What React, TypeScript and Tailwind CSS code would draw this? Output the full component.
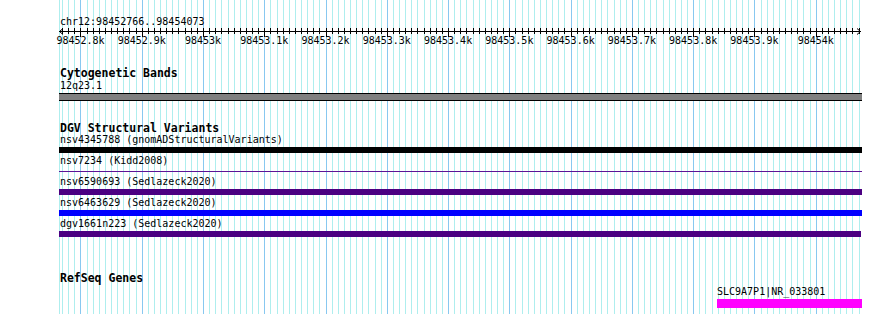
const START = 98452766;
const END = 98454073;
const PX0 = 59; // page x of track start
const BP = 0.6127; // px per bp, from the major ticks
const xOf = (pos: number) => 203 + (pos - 98453000) * BP;

const minor: number[] = [];
for (let p = Math.ceil(START / 10) * 10; p <= END; p += 10) minor.push(p);
const major = minor.filter((p) => p % 100 === 0);

const label = (p: number) => {
  const k = p / 1000;
  return `${Number.isInteger(k) ? k : k.toFixed(1)}k`;
};

const variants = [
  { name: "nsv4345788 (gnomADStructuralVariants)", color: "bg-black", thin: false, right: 0 },
  { name: "nsv7234 (Kidd2008)", color: "bg-[#5c1496]", thin: true, right: 0 },
  { name: "nsv6590693 (Sedlazeck2020)", color: "bg-[#4b0082]", thin: false, right: 0 },
  { name: "nsv6463629 (Sedlazeck2020)", color: "bg-[#0000ff]", thin: false, right: 0 },
  { name: "dgv1661n223 (Sedlazeck2020)", color: "bg-[#4b0082]", thin: false, right: 1 },
];

function Grid() {
  return (
    <svg className="absolute left-0 top-0" width={890} height={314}>
      <line x1={PX0 + 0.5} x2={PX0 + 0.5} y1={0} y2={314} stroke="#aeeeee" />
      {minor.map((p) => {
        const x = Math.round(xOf(p)) + 0.5;
        return (
          <line key={p} x1={x} x2={x} y1={0} y2={314} stroke={p % 100 === 0 ? "#88c8f0" : "#aeeeee"} />
        );
      })}
    </svg>
  );
}

function Ruler() {
  return (
    <svg width={803} height={20} className="block overflow-visible">
      <line x1={0} x2={802} y1={3.5} y2={3.5} stroke="#000" />
      <polyline points="4,0.5 0.5,3.5 4,6.5" fill="none" stroke="#000" />
      <polyline points="798,0.5 801.5,3.5 798,6.5" fill="none" stroke="#000" />
      {minor.map((p) => {
        const x = Math.round(xOf(p)) - PX0 + 0.5;
        return <line key={p} x1={x} x2={x} y1={0} y2={p % 100 === 0 ? 9 : 6} stroke="#000" />;
      })}
      {major.map((p) => (
        <text
          key={p}
          x={xOf(p) - PX0}
          y={16}
          textAnchor="middle"
          fontSize={10}
          fontFamily="'DejaVu Sans Mono', monospace"
          fill="#000"
        >
          {label(p)}
        </text>
      ))}
    </svg>
  );
}

export default function App() {
  return (
    <div className="relative h-[314px] w-[890px] overflow-hidden bg-white font-['DejaVu_Sans_Mono',monospace] text-[10px] text-black">
      <Grid />
      <div className="relative flex w-[862px] flex-col pl-[59px]">
        <div className="h-[28px] pl-px pt-[16px] leading-[12px]">chr12:98452766..98454073</div>
        <Ruler />

        <div className="mt-[20px] h-[11px] pl-px text-[11.5px] font-bold leading-[11px]">Cytogenetic Bands</div>
        <div className="mt-px h-[12px] pl-px leading-[12px]">12q23.1</div>
        <div className="mt-px h-[8px] border-y border-black bg-[#808080]" />

        <div className="mt-[22px] h-[11px] pl-px text-[11.5px] font-bold leading-[11px]">DGV Structural Variants</div>
        {variants.map((v) => (
          <div key={v.name} className="flex h-[21px] flex-col">
            <div className="h-[12px] pl-px leading-[12px]">{v.name}</div>
            <div className="mt-px flex h-[6px] items-center">
              <div className={`${v.color} ${v.thin ? "h-px" : "h-[6px]"} ${v.right ? "mr-px" : ""} w-full`} />
            </div>
          </div>
        ))}

        <div className="mt-[34px] h-[11px] pl-px text-[11.5px] font-bold leading-[11px]">RefSeq Genes</div>
        <div className="ml-[658px] mt-[2px] h-[11px] leading-[11px]">SLC9A7P1|NR_033801</div>
        <div className="ml-[658px] mt-[2px] h-[9px] bg-[#ff00ff]" />
      </div>
    </div>
  );
}
